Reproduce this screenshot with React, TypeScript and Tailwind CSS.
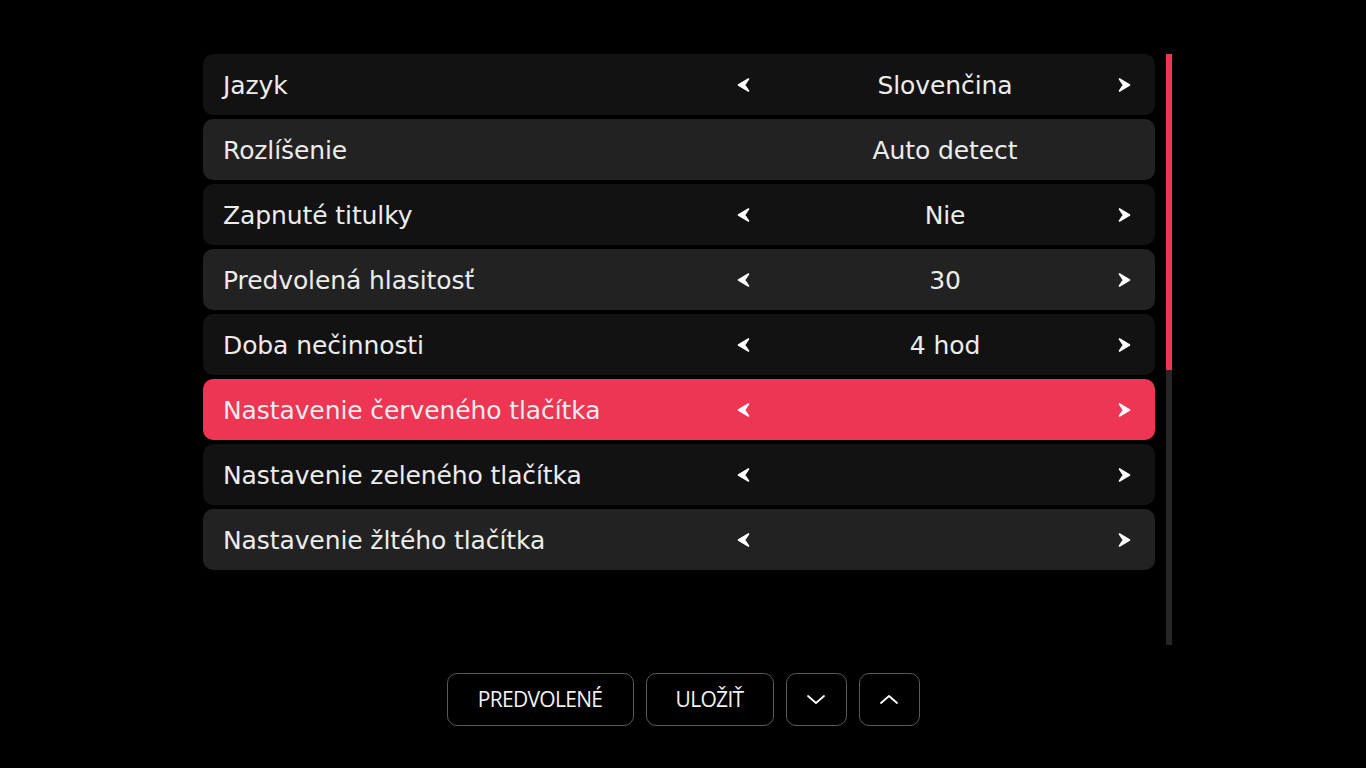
const ROWS = [
  { label: "Jazyk", value: "Slovenčina", arrows: true },
  { label: "Rozlíšenie", value: "Auto detect", arrows: false },
  { label: "Zapnuté titulky", value: "Nie", arrows: true },
  { label: "Predvolená hlasitosť", value: "30", arrows: true },
  { label: "Doba nečinnosti", value: "4 hod", arrows: true },
  { label: "Nastavenie červeného tlačítka", value: "", arrows: true, active: true },
  { label: "Nastavenie zeleného tlačítka", value: "", arrows: true },
  { label: "Nastavenie žltého tlačítka", value: "", arrows: true },
];

function Arrow({ dir }: { dir: "left" | "right" }) {
  return (
    <svg width="13" height="16" viewBox="0 0 13 16" className="block">
      {dir === "left" ? (
        <path d="M11.5 2 L1.5 8 L11.5 14 L7.5 8 Z" fill="white" stroke="white" strokeWidth="1.6" strokeLinejoin="round" />
      ) : (
        <path d="M1.5 2 L11.5 8 L1.5 14 L5.5 8 Z" fill="white" stroke="white" strokeWidth="1.6" strokeLinejoin="round" />
      )}
    </svg>
  );
}

function Row({ label, value, arrows, active, idx }: { label: string; value: string; arrows: boolean; active?: boolean; idx: number }) {
  const bg = active ? "bg-[#ee3553]" : idx % 2 === 0 ? "bg-[#121212]" : "bg-[#222222]";
  return (
    <div className={`flex items-center h-[61px] rounded-[10px] ${bg} text-[#ececec]`}>
      <div className="flex-1 pl-5 text-[25px] leading-none pt-[2px] tracking-[-0.1px]">{label}</div>
      <div className="relative w-[420px] h-full flex items-center justify-center">
        {arrows && (
          <span className="absolute left-[2px] top-1/2 -translate-y-1/2">
            <Arrow dir="left" />
          </span>
        )}
        <span className="text-[25px] leading-none pt-[2px] tracking-[-0.1px]">{value}</span>
        {arrows && (
          <span className="absolute right-[24px] top-1/2 -translate-y-1/2">
            <Arrow dir="right" />
          </span>
        )}
      </div>
    </div>
  );
}

export default function App() {
  return (
    <div
      className="w-[1366px] h-[768px] bg-black flex flex-col overflow-hidden"
      style={{ fontFamily: "'DejaVu Sans', sans-serif" }}
    >
      <div className="flex pt-[54px] pl-[203px] gap-[11px]">
        <div className="w-[952px] flex flex-col gap-1">
          {ROWS.map((r, i) => (
            <Row key={r.label} idx={i} {...r} />
          ))}
        </div>
        <div className="w-[6px] h-[591px] bg-[#262626] flex flex-col">
          <div className="h-[316px] bg-[#ee3553]" />
        </div>
      </div>
      <div
        className="flex justify-center gap-[12px] mt-[28px] text-[#f2f2f2]"
        style={{ fontFamily: "'Open Sans', sans-serif" }}
      >
        <button className="w-[187px] h-[53px] rounded-[10px] border border-[#5a5a5a] text-[21px] font-medium tracking-[-0.7px]">
          PREDVOLENÉ
        </button>
        <button className="w-[128px] h-[53px] rounded-[10px] border border-[#5a5a5a] text-[21px] font-medium tracking-[-0.7px]">
          ULOŽIŤ
        </button>
        <button className="w-[61px] h-[53px] rounded-[10px] border border-[#5a5a5a] flex items-center justify-center">
          <svg width="20" height="11" viewBox="0 0 20 11" fill="none" stroke="white" strokeWidth="1.8" strokeLinecap="round" strokeLinejoin="round">
            <path d="M2 2 L10 9 L18 2" />
          </svg>
        </button>
        <button className="w-[61px] h-[53px] rounded-[10px] border border-[#5a5a5a] flex items-center justify-center">
          <svg width="20" height="11" viewBox="0 0 20 11" fill="none" stroke="white" strokeWidth="1.8" strokeLinecap="round" strokeLinejoin="round">
            <path d="M2 9 L10 2 L18 9" />
          </svg>
        </button>
      </div>
    </div>
  );
}
